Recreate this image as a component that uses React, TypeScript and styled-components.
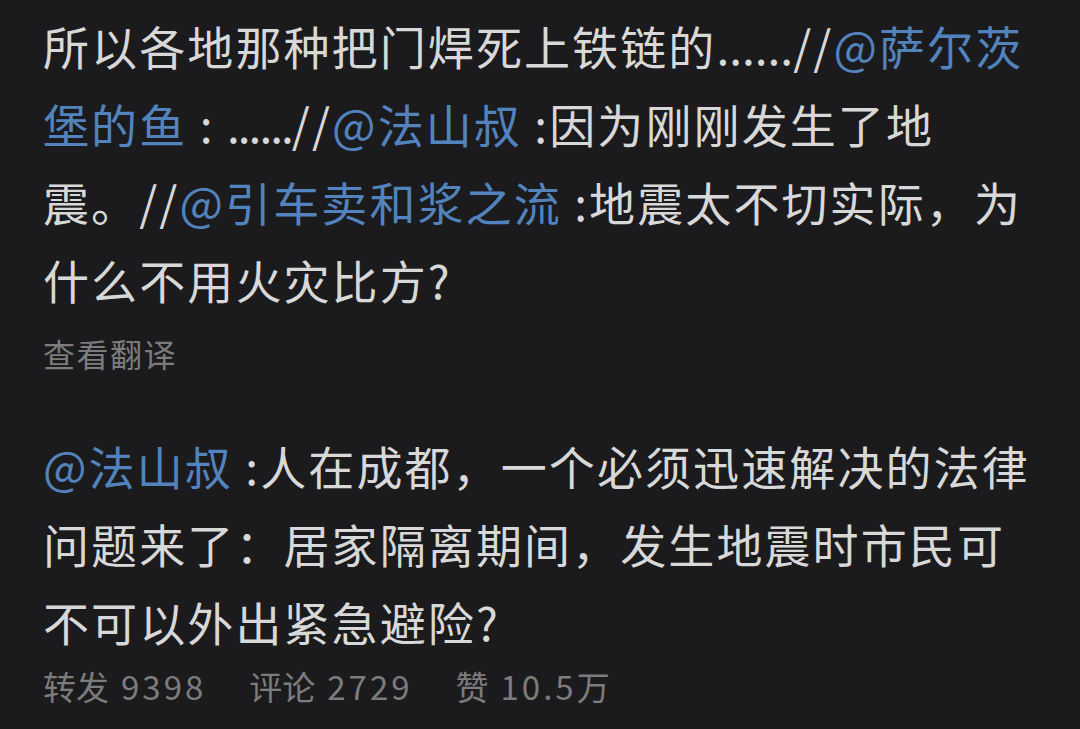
import styled, { createGlobalStyle } from "styled-components";

const GlobalStyle = createGlobalStyle`
	html, body {
		margin: 0;
		padding: 0;
		background: #1b1b1d;
	}
	body {
		font-family: "Noto Sans CJK SC", "Noto Sans", sans-serif;
	}
`;

const Page = styled.div`
	width: 1080px;
	height: 729px;
	box-sizing: border-box;
	padding: 6px 43px 0;
	background: #1b1b1d;
	overflow: hidden;
`;

const Post = styled.section`
	display: flex;
	flex-direction: column;
`;

const Body = styled.p`
	margin: 0;
	font-size: 46px;
	line-height: 78px;
	letter-spacing: 2.1px;
	color: #d8d8d8;
	white-space: nowrap;
`;

const Mention = styled.span`
	color: #5283bd;
`;

const Dots = styled.span<{ $tight?: boolean }>`
	letter-spacing: ${(p) => (p.$tight ? "-2px" : "0px")};
`;

const Translate = styled.div`
	margin-top: 11px;
	font-size: 32px;
	line-height: 48px;
	color: #7c7c7c;
	letter-spacing: 1.5px;
`;

const Divider = styled.div`
	height: 49px;
`;

const Stats = styled.div`
	display: flex;
	gap: 43px;
	margin-top: 6px;
	font-size: 33px;
	line-height: 40px;
	color: #7c7c7c;
`;

const Stat = styled.span`
	display: inline-flex;
	gap: 12px;
`;

const StatValue = styled.span`
	letter-spacing: 3px;
`;

const stats = [
	{ label: "转发", value: "9398" },
	{ label: "评论", value: "2729" },
	{ label: "赞", value: "10.5万" },
];

export default function App() {
	return (
		<Page>
			<GlobalStyle />
			<Post>
				<Body>
					所以各地那种把门焊死上铁链的<Dots>......</Dots>//<Mention>@萨尔茨</Mention>
					<br />
					<Mention>堡的鱼</Mention> : <Dots $tight>......</Dots>//<Mention>@法山叔</Mention> :因为刚刚发生了地
					<br />
					震。//<Mention>@引车卖和浆之流</Mention> :地震太不切实际，为
					<br />
					什么不用火灾比方?
				</Body>
				<Translate>查看翻译</Translate>
			</Post>
			<Divider />
			<Post>
				<Body>
					<Mention>@法山叔</Mention> :人在成都，一个必须迅速解决的法律
					<br />
					问题来了：居家隔离期间，发生地震时市民可
					<br />
					不可以外出紧急避险?
				</Body>
				<Stats>
					{stats.map((s) => (
						<Stat key={s.label}>
							<span>{s.label}</span>
							<StatValue>{s.value}</StatValue>
						</Stat>
					))}
				</Stats>
			</Post>
		</Page>
	);
}
